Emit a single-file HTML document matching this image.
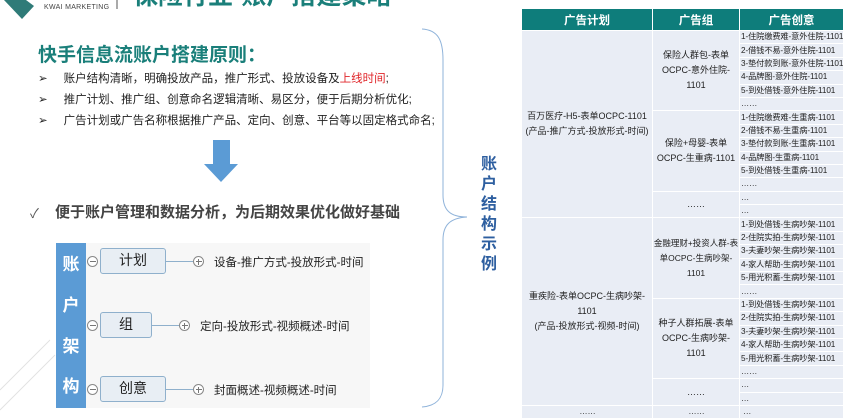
<!DOCTYPE html>
<html><head><meta charset="utf-8"><style>
*{margin:0;padding:0;box-sizing:border-box}
body{width:859px;height:417px;overflow:hidden;background:#fff;position:relative;font-family:"Liberation Sans","Noto Sans CJK SC",sans-serif;color:#222}
.a{position:absolute;white-space:nowrap}
table{position:absolute;left:521px;top:8px;width:322px;border-collapse:collapse;table-layout:fixed;font-size:9px;color:#222}
td,th{border:1.5px solid #fff;background:#e9edf5;padding:0;text-align:center;vertical-align:middle;overflow:hidden;white-space:nowrap}
th{background:#0e7d7b;color:#fff;font-size:11.5px;height:22px}
td.c{text-align:left;padding-left:1px;height:13.4px;line-height:12px;font-size:8.2px;letter-spacing:-0.1px}
td.g{line-height:15px;font-size:9px}
td.p{line-height:15px;font-size:9px}
.node{position:absolute;left:100px;height:26px;border:1.5px solid #8fb0cc;border-radius:3px;background:#e8eef4;font-size:14px;text-align:center;line-height:23px;color:#222}
.circ{position:absolute;width:11px;height:11px;border:1px solid #888;border-radius:50%;background:#fff}
.circ:before{content:"";position:absolute;left:1.5px;right:1.5px;top:4px;height:1px;background:#777}
.plus:after{content:"";position:absolute;top:1.5px;bottom:1.5px;left:4px;width:1px;background:#777}
.ln{position:absolute;height:1px;background:#8fb0cc}
.lab{position:absolute;font-size:11.5px;color:#222;white-space:nowrap}
</style></head><body>
<svg class="a" style="left:0;top:0" width="859" height="417">
<polygon points="4,0 26,0 34,6 22,19" fill="#2f7b78"/>
<line x1="117" y1="0" x2="117" y2="9" stroke="#555" stroke-width="1"/>
<path d="M422,29 C438,30 443,40 443,60 L443,195 C443,210 450,217 467,217 C450,218 443,225 443,240 L443,385 C443,400 435,406 422,407" fill="none" stroke="#8fb3da" stroke-width="1"/>
<polygon points="213,140 230,140 230,164 238,164 221,182 204,164 213,164" fill="#5b9bd5"/>
<path d="M0,390 L50,340 M0,410 L55,355" stroke="#e2e2e2" stroke-width="1" fill="none"/>
</svg>
<div class="a" style="left:44px;top:4px;font-size:7px;color:#444;letter-spacing:.3px">KWAI MARKETING</div>
<div class="a" style="left:133px;top:-24px;font-size:25px;font-weight:bold;color:#1a7f7a">保险行业-账户搭建策略</div>
<div class="a" style="left:38px;top:40px;font-size:19px;font-weight:bold;color:#1a7f7a">快手信息流账户搭建原则：</div>
<div class="a" style="left:38px;top:69px;font-size:11.5px;line-height:21px;color:#222">
<div>➢&nbsp;&nbsp;&nbsp;&nbsp;&nbsp;账户结构清晰，明确投放产品，推广形式、投放设备及<span style="color:#e0262a">上线时间</span>;</div>
<div>➢&nbsp;&nbsp;&nbsp;&nbsp;&nbsp;推广计划、推广组、创意命名逻辑清晰、易区分，便于后期分析优化;</div>
<div>➢&nbsp;&nbsp;&nbsp;&nbsp;&nbsp;广告计划或广告名称根据推广产品、定向、创意、平台等以固定格式命名;</div>
</div>
<div class="a" style="left:30px;top:203px;font-size:13px;color:#555">✓</div>
<div class="a" style="left:55px;top:201px;font-size:15px;font-weight:bold;color:#444">便于账户管理和数据分析，为后期效果优化做好基础</div>
<div class="a" style="left:86px;top:243px;width:284px;height:165px;background:#f7f7f7"></div>
<div class="a" style="left:56px;top:243px;width:30px;height:165px;background:#5b9bd5;color:#fff;font-weight:bold;font-size:17px;text-align:center">
<div style="position:absolute;top:7px;width:30px">账</div><div style="position:absolute;top:48px;width:30px">户</div><div style="position:absolute;top:89px;width:30px">架</div><div style="position:absolute;top:129px;width:30px">构</div></div>
<div class="circ" style="left:87px;top:256px"></div><div class="node" style="top:248px;width:66px">计划</div><div class="ln" style="left:166px;top:261px;width:27px"></div><div class="circ plus" style="left:193px;top:256px"></div><div class="lab" style="left:214px;top:254px">设备-推广方式-投放形式-时间</div>
<div class="circ" style="left:87px;top:320px"></div><div class="node" style="top:312px;width:52px">组</div><div class="ln" style="left:152px;top:325px;width:27px"></div><div class="circ plus" style="left:179px;top:320px"></div><div class="lab" style="left:200px;top:318px">定向-投放形式-视频概述-时间</div>
<div class="circ" style="left:87px;top:384px"></div><div class="node" style="top:376px;width:66px">创意</div><div class="ln" style="left:166px;top:389px;width:27px"></div><div class="circ plus" style="left:193px;top:384px"></div><div class="lab" style="left:214px;top:382px">封面概述-视频概述-时间</div>
<div class="a" style="left:481px;top:155px;font-size:16px;font-weight:bold;color:#2e5fa0;line-height:20px;width:18px;white-space:normal">账户结构示例</div>
<table>
<colgroup><col style="width:131px"><col style="width:87px"><col style="width:104px"></colgroup>
<tr><th>广告计划</th><th>广告组</th><th>广告创意</th></tr>
<tr><td rowspan="14" class="p">百万医疗-H5-表单OCPC-1101<br>(产品-推广方式-投放形式-时间)</td><td rowspan="6" class="g">保险人群包-表单<br>OCPC-意外住院-<br>1101</td><td class="c">1-住院缴费难-意外住院-1101</td></tr>
<tr><td class="c">2-借钱不易-意外住院-1101</td></tr>
<tr><td class="c">3-垫付款到账-意外住院-1101</td></tr>
<tr><td class="c">4-品牌图-意外住院-1101</td></tr>
<tr><td class="c">5-到处借钱-意外住院-1101</td></tr>
<tr><td class="c">……</td></tr>
<tr><td rowspan="6" class="g">保险+母婴-表单<br>OCPC-生重病-1101</td><td class="c">1-住院缴费难-生重病-1101</td></tr>
<tr><td class="c">2-借钱不易-生重病-1101</td></tr>
<tr><td class="c">3-垫付款到账-生重病-1101</td></tr>
<tr><td class="c">4-品牌图-生重病-1101</td></tr>
<tr><td class="c">5-到处借钱-生重病-1101</td></tr>
<tr><td class="c">……</td></tr>
<tr><td rowspan="2" class="g">……</td><td class="c">…</td></tr>
<tr><td class="c">…</td></tr>
<tr><td rowspan="14" class="p">重疾险-表单OCPC-生病吵架-<br>1101<br>(产品-投放形式-视频-时间)</td><td rowspan="6" class="g" style="font-size:8.5px">金融理财+投资人群-表<br>单OCPC-生病吵架-<br>1101</td><td class="c">1-到处借钱-生病吵架-1101</td></tr>
<tr><td class="c">2-住院实拍-生病吵架-1101</td></tr>
<tr><td class="c">3-夫妻吵架-生病吵架-1101</td></tr>
<tr><td class="c">4-家人帮助-生病吵架-1101</td></tr>
<tr><td class="c">5-用光积蓄-生病吵架-1101</td></tr>
<tr><td class="c">……</td></tr>
<tr><td rowspan="6" class="g">种子人群拓展-表单<br>OCPC-生病吵架-<br>1101</td><td class="c">1-到处借钱-生病吵架-1101</td></tr>
<tr><td class="c">2-住院实拍-生病吵架-1101</td></tr>
<tr><td class="c">3-夫妻吵架-生病吵架-1101</td></tr>
<tr><td class="c">4-家人帮助-生病吵架-1101</td></tr>
<tr><td class="c">5-用光积蓄-生病吵架-1101</td></tr>
<tr><td class="c">……</td></tr>
<tr><td rowspan="2" class="g">……</td><td class="c">…</td></tr>
<tr><td class="c">…</td></tr>
<tr><td class="c" style="text-align:center">……</td><td class="c" style="text-align:center">……</td><td class="c">&nbsp;…</td></tr>
</table>
</body></html>
